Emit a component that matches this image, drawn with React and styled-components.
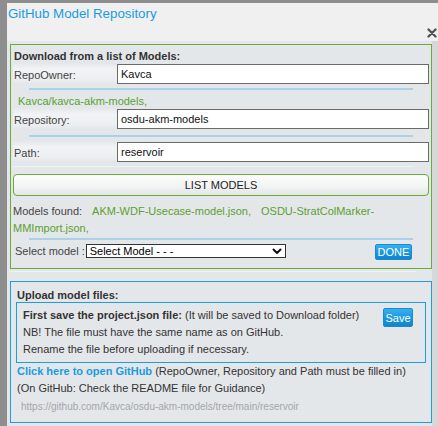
import React from 'react'
import styled, { createGlobalStyle } from 'styled-components'

const GlobalStyle = createGlobalStyle`
    html, body {
        margin: 0;
        padding: 0;
        background: #8e8e8e;
    }
    body {
        font-family: "Liberation Sans", Arial, Helvetica, sans-serif;
        font-size: 11px;
        color: #333;
    }
`

function Field({ label, value, top }) {
    return (
        <Row $top={top}>
            <Label>{label}</Label>
            <Input defaultValue={value} />
        </Row>
    )
}

function CloseIcon() {
    return (
        <svg width="10" height="10" viewBox="0 0 10 10">
            <path d="M1.5 1.5 L8.5 8.5 M8.5 1.5 L1.5 8.5" stroke="#555" strokeWidth="2.4" strokeLinecap="round" />
        </svg>
    )
}

function Chevron() {
    return (
        <svg width="10" height="7" viewBox="0 0 10 7">
            <path d="M1.5 1.5 L5 5 L8.5 1.5" stroke="#111" strokeWidth="2" fill="none" strokeLinecap="round" strokeLinejoin="round" />
        </svg>
    )
}

export default function App() {
    return (
        <>
            <GlobalStyle />
            <Page>
                <Dialog>
                    <Header>
                        <Title>GitHub Model Repository</Title>
                        <CloseRow>
                            <CloseButton><CloseIcon /></CloseButton>
                        </CloseRow>
                    </Header>
                    <Body>
                        <DownloadBox>
                            <Heading>Download from a list of Models:</Heading>
                            <Field label="RepoOwner:" value="Kavca" />
                            <BlueRule />
                            <GreenText>Kavca/kavca-akm-models,</GreenText>
                            <Field label="Repository:" value="osdu-akm-models" />
                            <BlueRule $top={6} />
                            <Field label="Path:" value="reservoir" top={4} />
                            <FaintRule />
                            <ListButton>LIST MODELS</ListButton>
                            <Found>
                                <FoundLine>
                                    Models found:
                                    <FoundLink>AKM-WDF-Usecase-model.json,</FoundLink>
                                    <FoundLink>OSDU-StratColMarker-</FoundLink>
                                </FoundLine>
                                <FoundLine>
                                    <FoundLink $first>MMImport.json,</FoundLink>
                                </FoundLine>
                            </Found>
                            <BlueRule $top={1} />
                            <SelectRow>
                                <SelectLabel>Select model :</SelectLabel>
                                <SelectWrap>
                                    <Select defaultValue="">
                                        <option value="">Select Model - - -</option>
                                    </Select>
                                    <ChevronBox><Chevron /></ChevronBox>
                                </SelectWrap>
                                <Spacer />
                                <BlueButton $w={37} $h={16}>DONE</BlueButton>
                            </SelectRow>
                        </DownloadBox>
                        <Divider />
                        <UploadBox>
                            <Heading $left={1}>Upload model files:</Heading>
                            <SaveBox>
                                <SaveText>
                                    <div><b>First save the project.json file:</b> (It will be saved to Download folder)</div>
                                    <div>NB! The file must have the same name as on GitHub.</div>
                                    <div>Rename the file before uploading if necessary.</div>
                                </SaveText>
                                <BlueButton $w={30} $h={19} $top={1}>Save</BlueButton>
                            </SaveBox>
                            <Line><GitLink>Click here to open GitHub</GitLink> (RepoOwner, Repository and Path must be filled in)</Line>
                            <Line>(On GitHub: Check the README file for Guidance)</Line>
                            <Url>https://github.com/Kavca/osdu-akm-models/tree/main/reservoir</Url>
                        </UploadBox>
                    </Body>
                </Dialog>
            </Page>
        </>
    )
}

const Page = styled.div`
    height: 426px;
    padding: 3px 0 0 7px;
    box-sizing: border-box;
    display: flex;
    overflow: hidden;
`

const Dialog = styled.div`
    flex: 1;
    display: flex;
    flex-direction: column;
    background: #f0f0f0;
`

const Header = styled.div`
    height: 38px;
    display: flex;
    flex-direction: column;
`

const Title = styled.div`
    padding: 3px 0 0 1px;
    font-size: 13.3px;
    line-height: 16px;
    color: #1a9be0;
`

const CloseRow = styled.div`
    display: flex;
    justify-content: flex-end;
    padding: 6px 1px 0 0;
`

const CloseButton = styled.div`
    width: 10px;
    height: 10px;
    display: flex;
    cursor: pointer;
`

const Body = styled.div`
    flex: 1;
    background: #e4e7ea;
    padding: 3px 0 0 3px;
    border-right: 6px solid #d5d7d9;
`

const DownloadBox = styled.div`
    border: 1px solid #6aab3c;
    padding: 4px 2px 8px 2px;
`

const Heading = styled.div`
    font-weight: bold;
    line-height: 14px;
    padding-left: ${(p) => p.$left ?? 1}px;
    color: #333;
`

const Row = styled.div`
    display: grid;
    grid-template-columns: 104px 1fr;
    height: 21px;
    margin-top: ${(p) => p.$top ?? 0}px;
`

const Label = styled.div`
    padding: 5px 0 0 1px;
    line-height: 14px;
    color: #444;
    background: linear-gradient(#e4e7ea, #f2f3f5 30%, #eceef0 80%, #e4e7ea);
`

const Input = styled.input`
    margin-top: 1px;
    height: 20px;
    box-sizing: border-box;
    border: 1.5px solid #6a6a6a;
    background: #fff;
    padding: 0 3px;
    font: 11px "Liberation Sans", Arial, sans-serif;
    color: #111;
    outline: none;
`

const BlueRule = styled.div`
    height: 2px;
    margin: ${(p) => p.$top ?? 4}px 16px 0 16px;
    background: #a9d2ea;
`

const FaintRule = styled.div`
    height: 1px;
    margin: 4px 16px 0 0;
    background: #eff1f2;
`

const GreenText = styled.div`
    margin-top: 4px;
    padding-left: 5px;
    line-height: 14px;
    color: #5a9f2e;
`

const ListButton = styled.div`
    margin-top: 7px;
    height: 22px;
    box-sizing: border-box;
    border: 1px solid #6aab3c;
    border-radius: 4px;
    background: linear-gradient(#fdfdfd, #f2f3f3 60%, #e3e5e6);
    display: flex;
    align-items: center;
    justify-content: center;
    font-size: 11px;
    color: #222;
    cursor: pointer;
`

const Found = styled.div`
    margin-top: 7px;
    color: #444;
`

const FoundLine = styled.div`
    line-height: 17px;
    white-space: nowrap;
`

const FoundLink = styled.span`
    color: #5a9f2e;
    margin-left: ${(p) => (p.$first ? 0 : 10)}px;
`

const SelectRow = styled.div`
    margin-top: 4px;
    display: flex;
    align-items: flex-start;
    padding: 0 17px 0 2px;
`

const SelectLabel = styled.div`
    line-height: 14px;
    color: #444;
    margin-right: 1px;
`

const SelectWrap = styled.div`
    position: relative;
    width: 200px;
    height: 14px;
`

const Select = styled.select`
    appearance: none;
    width: 100%;
    height: 14px;
    box-sizing: border-box;
    border: 1px solid #333;
    border-radius: 0;
    background: #fff;
    padding: 0 0 0 3px;
    font: 11px "Liberation Sans", Arial, sans-serif;
    color: #000;
    outline: none;
`

const ChevronBox = styled.div`
    position: absolute;
    right: 4px;
    top: 4px;
    display: flex;
    pointer-events: none;
`

const Spacer = styled.div`
    flex: 1;
`

const BlueButton = styled.div`
    width: ${(p) => p.$w}px;
    height: ${(p) => p.$h}px;
    margin-top: ${(p) => p.$top ?? 0}px;
    box-sizing: border-box;
    border-radius: 2px;
    border: 1px solid #1a8ad0;
    background: linear-gradient(#37b1ee, #1996dd 55%, #0f86cf);
    color: #fff;
    font-size: 11px;
    display: flex;
    align-items: center;
    justify-content: center;
    flex-shrink: 0;
    cursor: pointer;
`

const Divider = styled.div`
    height: 1px;
    margin: 2px 16px 0 0;
    background: #eff1f2;
`

const UploadBox = styled.div`
    margin-top: 9px;
    border: 1px solid #1f9de2;
    padding: 6px 5px 8px 5px;
`

const SaveBox = styled.div`
    border: 1px solid #1f9de2;
    padding: 4px 12px 4px 6px;
    display: flex;
    align-items: flex-start;
`

const SaveText = styled.div`
    flex: 1;
    line-height: 17px;
    color: #333;
`

const Line = styled.div`
    line-height: 17px;
    padding-left: 1px;
    color: #333;
`

const GitLink = styled.span`
    font-weight: bold;
    color: #1a9be0;
    cursor: pointer;
`

const Url = styled.div`
    margin-top: 3px;
    padding-left: 5px;
    line-height: 14px;
    font-size: 10px;
    color: #a3a6a9;
`
